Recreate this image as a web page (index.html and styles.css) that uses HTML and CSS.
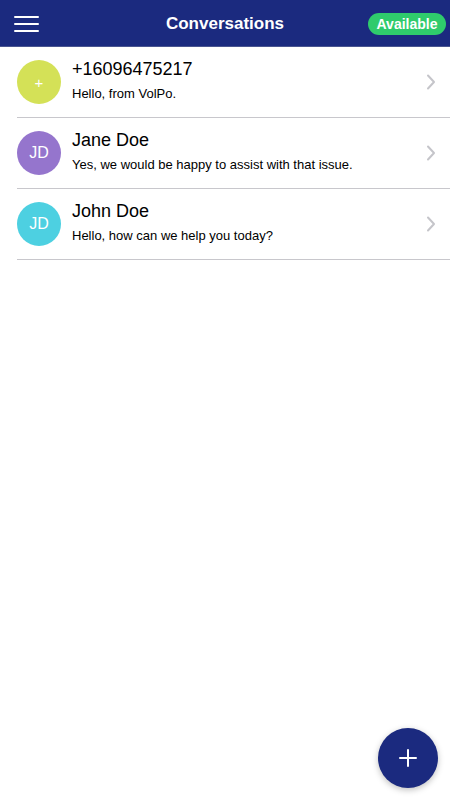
FILE: index.html
```html
<!DOCTYPE html>
<html lang="en">
<head>
<meta charset="utf-8">
<title>Conversations</title>
<link rel="stylesheet" href="styles.css">
</head>
<body>
<div class="app">
  <header class="topbar">
    <div class="topbar-left">
      <button class="menu-btn" aria-label="Menu">
        <span class="bar"></span><span class="bar"></span><span class="bar"></span>
      </button>
    </div>
    <h1 class="title">Conversations</h1>
    <div class="topbar-right">
      <span class="status">Available</span>
    </div>
  </header>

  <ul class="list">
    <li class="row">
      <div class="avatar avatar-lime">+</div>
      <div class="text">
        <div class="name">+16096475217</div>
        <div class="msg">Hello, from VolPo.</div>
      </div>
      <svg class="chev" width="10" height="16" viewBox="0 0 10 16"><polyline points="2,1.5 8,8 2,14.5" fill="none" stroke="#c5c5ca" stroke-width="2" stroke-linecap="round" stroke-linejoin="round"/></svg>
    </li>
    <li class="row">
      <div class="avatar avatar-purple">JD</div>
      <div class="text">
        <div class="name">Jane Doe</div>
        <div class="msg">Yes, we would be happy to assist with that issue.</div>
      </div>
      <svg class="chev" width="10" height="16" viewBox="0 0 10 16"><polyline points="2,1.5 8,8 2,14.5" fill="none" stroke="#c5c5ca" stroke-width="2" stroke-linecap="round" stroke-linejoin="round"/></svg>
    </li>
    <li class="row">
      <div class="avatar avatar-cyan">JD</div>
      <div class="text">
        <div class="name">John Doe</div>
        <div class="msg">Hello, how can we help you today?</div>
      </div>
      <svg class="chev" width="10" height="16" viewBox="0 0 10 16"><polyline points="2,1.5 8,8 2,14.5" fill="none" stroke="#c5c5ca" stroke-width="2" stroke-linecap="round" stroke-linejoin="round"/></svg>
    </li>
  </ul>

  <button class="fab" aria-label="New conversation">
    <svg width="20" height="20" viewBox="0 0 20 20"><path d="M10 2V18M2 10H18" stroke="#fff" stroke-width="2" stroke-linecap="round"/></svg>
  </button>
</div>
</body>
</html>
```

FILE: styles.css
```css
* { box-sizing: border-box; }

html, body {
  margin: 0;
  padding: 0;
  background: #ffffff;
}

body {
  font-family: "Liberation Sans", Arial, sans-serif;
  color: #000;
}

.app {
  position: relative;
  width: 450px;
  height: 800px;
  overflow: hidden;
  background: #fff;
}

.topbar {
  height: 47px;
  padding-top: 2px;
  background: #1b2a7f;
  border-bottom: 1px solid #4a5590;
  display: grid;
  grid-template-columns: 1fr auto 1fr;
  align-items: center;
}

.topbar-left {
  display: flex;
  align-items: center;
  padding-left: 14px;
}

.menu-btn {
  background: none;
  border: 0;
  padding: 0;
  width: 25px;
  display: flex;
  flex-direction: column;
  gap: 5px;
  cursor: pointer;
}

.bar {
  display: block;
  width: 25px;
  height: 2px;
  background: #fff;
  border-radius: 1px;
}

.title {
  margin: 0;
  font-size: 17px;
  font-weight: 700;
  color: #fff;
  letter-spacing: 0;
}

.topbar-right {
  display: flex;
  justify-content: flex-end;
  padding-right: 4px;
}

.status {
  display: inline-flex;
  align-items: center;
  justify-content: center;
  width: 78px;
  height: 22px;
  border-radius: 11px;
  background: #2fcb6c;
  color: #fff;
  font-size: 14px;
  font-weight: 700;
}

.list {
  list-style: none;
  margin: 0;
  padding: 0 0 0 17px;
}

.row {
  height: 71px;
  display: flex;
  align-items: center;
  border-bottom: 1px solid #c8c7cc;
  padding-right: 14px;
}

.avatar {
  width: 44px;
  height: 44px;
  border-radius: 50%;
  flex: 0 0 44px;
  display: flex;
  align-items: center;
  justify-content: center;
  color: #fff;
  font-size: 16px;
}

.avatar-lime { background: #d4e157; font-size: 15px; }
.avatar-purple { background: #9575cd; }
.avatar-cyan { background: #4dd0e1; }

.text {
  flex: 1;
  min-width: 0;
  margin-left: 11px;
  padding-bottom: 4px;
  display: flex;
  flex-direction: column;
  gap: 6px;
}

.name {
  font-size: 18px;
  line-height: 22px;
  color: #000;
}

.msg {
  font-size: 13px;
  line-height: 16px;
  color: #000;
  white-space: nowrap;
  overflow: hidden;
  text-overflow: ellipsis;
}

.chev {
  flex: 0 0 auto;
}

.fab {
  position: absolute;
  right: 12px;
  bottom: 12px;
  width: 60px;
  height: 60px;
  border-radius: 50%;
  border: 0;
  background: #1b2a7f;
  display: flex;
  align-items: center;
  justify-content: center;
  box-shadow: 0 2px 6px rgba(0, 0, 0, 0.25);
  cursor: pointer;
}
```
